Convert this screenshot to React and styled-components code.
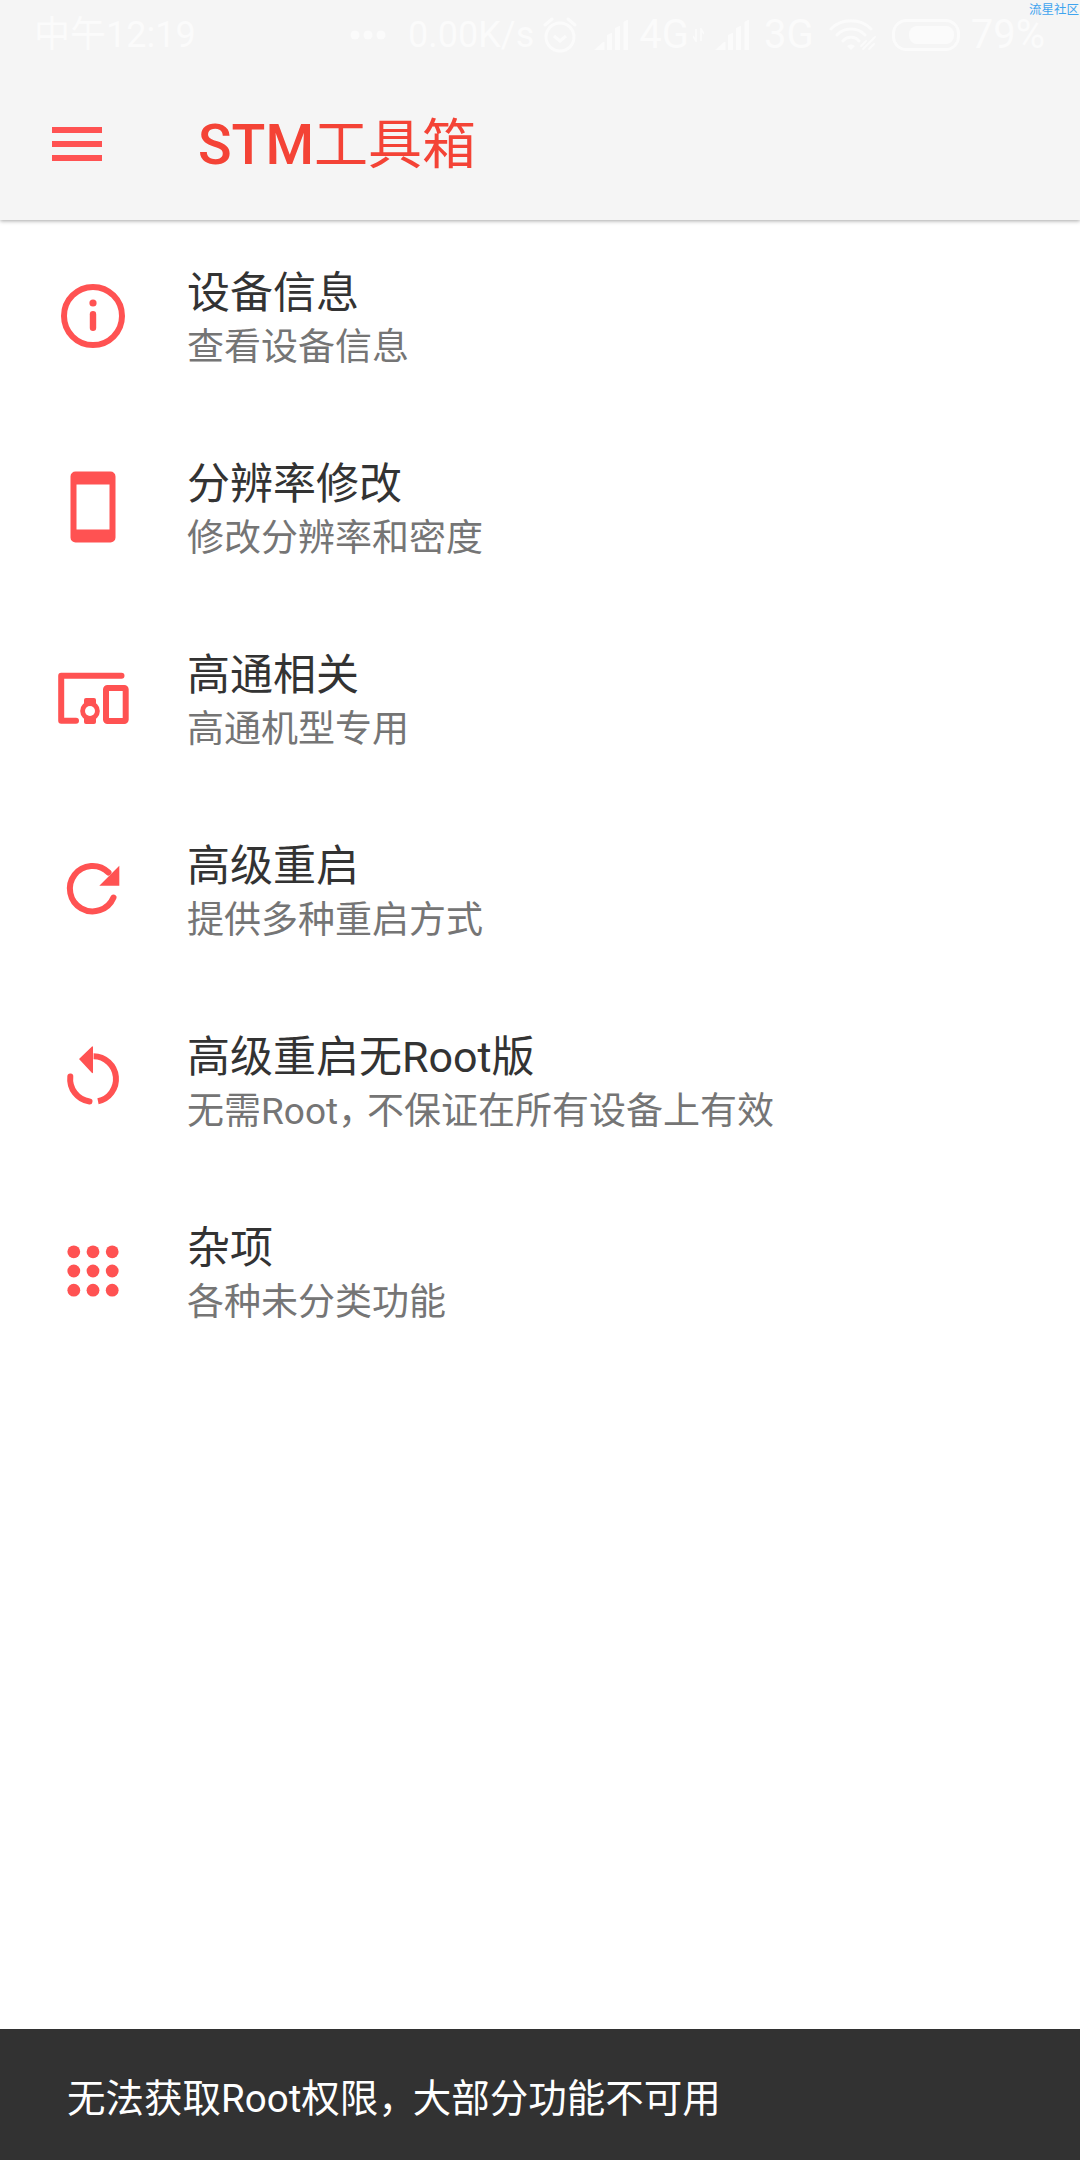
import React from "react";
import styled, { createGlobalStyle } from "styled-components";

const Global = createGlobalStyle`
  html, body { margin: 0; padding: 0; background: #fff; }
  body { font-family: Roboto, "Noto Sans CJK SC", sans-serif; }
`;

const Page = styled.div`
  position: relative;
  width: 1080px;
  height: 2160px;
  display: flex;
  flex-direction: column;
  background: #fff;
  overflow: hidden;
`;

const AppBar = styled.header`
  height: 220px;
  flex: none;
  display: flex;
  flex-direction: column;
  background: #f5f5f5;
  box-shadow: 0 1px 4px rgba(0, 0, 0, 0.35);
  position: relative;
  z-index: 1;
`;

const StatusBar = styled.div`
  height: 70px;
  display: flex;
  align-items: center;
  padding: 0 35px 0 34px;
  color: #fbfbfb;
  font-size: 36px;
  line-height: 70px;
`;

const Spacer = styled.div`
  flex: 1;
`;

const StatusText = styled.span`
  margin-left: ${(p) => p.$ml || 0}px;
  font-size: ${(p) => p.$size || 36}px;
  white-space: nowrap;
`;

const StatusIcon = styled.svg`
  flex: none;
  margin-left: ${(p) => p.$ml || 0}px;
  display: block;
`;

const Watermark = styled.span`
  position: absolute;
  top: 1px;
  right: 1px;
  font-size: 12.5px;
  line-height: 15px;
  color: #3fa4ef;
  font-family: "Noto Sans CJK SC", sans-serif;
`;

const Toolbar = styled.div`
  flex: 1;
  display: flex;
  align-items: center;
  padding-left: 52px;
`;

const Burger = styled.div`
  width: 50px;
  display: flex;
  flex-direction: column;
  gap: 8px;
  margin-bottom: 3px;
`;

const BurgerBar = styled.span`
  height: 6px;
  background: #ff5252;
  display: block;
`;

const Title = styled.h1`
  margin: 2px 0 0 96px;
  color: #f44336;
  font-size: 54px;
  font-weight: 400;
  line-height: 70px;
  white-space: nowrap;
`;

const Strong = styled.span`
  font-size: 55.5px;
  font-weight: 500;
`;

const List = styled.main`
  flex: 1;
  display: flex;
  flex-direction: column;
`;

const Row = styled.div`
  height: 191px;
  flex: none;
  display: flex;
  align-items: center;
  padding-left: 54px;
`;

const IconBox = styled.svg`
  width: 78px;
  height: 78px;
  flex: none;
  display: block;
`;

const RowText = styled.div`
  margin-left: 55px;
  padding-top: 9px;
  display: flex;
  flex-direction: column;
`;

const RowTitle = styled.div`
  color: #333;
  font-size: 43px;
  line-height: 56px;
  white-space: nowrap;
`;

const RowSub = styled.div`
  color: #757575;
  font-size: 37px;
  line-height: 54px;
  white-space: nowrap;
`;

const Comma = styled.span`
  letter-spacing: ${(p) => p.$tight}px;
`;

const Snackbar = styled.footer`
  height: 131px;
  flex: none;
  display: flex;
  align-items: center;
  padding-left: 67px;
  background: #323232;
  color: #fff;
  font-size: 38.5px;
`;

const RED = "#ff5252";

const InfoIcon = () => (
  <IconBox viewBox="0 0 78 78">
    <circle cx="39" cy="39" r="29" fill="none" stroke={RED} strokeWidth="6" />
    <circle cx="39" cy="26" r="3.6" fill={RED} />
    <rect x="35.800" y="34" width="6.400" height="20" rx="3.200" fill={RED} />
  </IconBox>
);

const PhoneIcon = () => (
  <IconBox viewBox="0 0 78 78">
    <path
      fillRule="evenodd"
      fill={RED}
      d="M21.5 3.5h35a5 5 0 0 1 5 5v61a5 5 0 0 1-5 5h-35a5 5 0 0 1-5-5v-61a5 5 0 0 1 5-5zM22.5 16.500v45h33v-45z"
    />
  </IconBox>
);

const DevicesIcon = () => (
  <IconBox viewBox="0 0 78 78">
    <path
      d="M67.500 16.700H7.200v45H22"
      fill="none"
      stroke={RED}
      strokeWidth="6"
      strokeLinecap="round"
      strokeLinejoin="round"
    />
    <rect x="52" y="29" width="19.700" height="33" rx="1.500" fill="none" stroke={RED} strokeWidth="6" />
    <rect x="30" y="39" width="12" height="26" rx="2" fill={RED} />
    <circle cx="36" cy="52" r="9.800" fill={RED} />
    <circle cx="36" cy="52" r="5" fill="#fff" />
  </IconBox>
);

const RefreshIcon = () => (
  <IconBox viewBox="0 0 78 78">
    <path
      d="M59.500 47.500A22.700 22.700 0 1 1 54.500 22.500"
      fill="none"
      stroke={RED}
      strokeWidth="6"
      strokeLinecap="round"
    />
    <path d="M65.300 15.700V35.700H45.300z" fill={RED} />
  </IconBox>
);

const RestoreIcon = () => (
  <IconBox viewBox="0 1 78 78">
    <path d="M39.600 16.300A22.700 22.700 0 0 1 44 61.200" fill="none" stroke={RED} strokeWidth="6" />
    <path
      d="M35.500 61.500A22.700 22.700 0 0 1 16.300 36.500"
      fill="none"
      stroke={RED}
      strokeWidth="6"
      strokeLinecap="round"
    />
    <path d="M25 19L38 6.500a0.600 0.600 0 0 1 1 0.500V32.500a0.600 0.600 0 0 1-1 0.500z" fill={RED} />
  </IconBox>
);

const GridIcon = () => (
  <IconBox viewBox="0 0 78 78">
    {[19.800, 39, 58.200].flatMap((y) =>
      [19.800, 39, 58.200].map((x) => <circle key={`${x}-${y}`} cx={x} cy={y} r="6.400" fill={RED} />)
    )}
  </IconBox>
);

const items = [
  { t: "设备信息", s: "查看设备信息", I: InfoIcon },
  { t: "分辨率修改", s: "修改分辨率和密度", I: PhoneIcon },
  { t: "高通相关", s: "高通机型专用", I: DevicesIcon },
  { t: "高级重启", s: "提供多种重启方式", I: RefreshIcon },
  {
    t: "高级重启无Root版",
    s: (
      <>
        无需Root<Comma $tight={-8}>，</Comma>不保证在所有设备上有效
      </>
    ),
    I: RestoreIcon,
  },
  { t: "杂项", s: "各种未分类功能", I: GridIcon },
];

const W = "#fbfbfb";

const Signal = ({ ml }) => (
  <StatusIcon $ml={ml} width="34" height="32" viewBox="0 0 34 32">
    <path fill={W} d="M0 31l9-8h1.500v8zM13 31V16l4-2h1v17zM21 31V9l4-2h1v24zM29.500 31V3l3-2h1.500v30z" />
  </StatusIcon>
);

const App = () => (
  <Page lang="zh-CN">
    <Global />
    <AppBar>
      <StatusBar>
        <StatusText>中午12:19</StatusText>
        <Spacer />
        <StatusIcon width="36" height="10" viewBox="0 0 36 10">
          <circle cx="5" cy="5" r="4.500" fill={W} />
          <circle cx="18" cy="5" r="4.500" fill={W} />
          <circle cx="31" cy="5" r="4.500" fill={W} />
        </StatusIcon>
        <StatusText $ml={22}>0.00K/s</StatusText>
        <StatusIcon $ml={9} width="34" height="36" viewBox="0 0 34 36">
          <circle cx="17" cy="20" r="14" fill="none" stroke={W} strokeWidth="3" />
          <path d="M11 19l6 5 6-5" fill="none" stroke={W} strokeWidth="3" />
          <path d="M2 8l7-6M32 8l-7-6" fill="none" stroke={W} strokeWidth="3" strokeLinecap="round" />
        </StatusIcon>
        <Signal ml={17} />
        <StatusText $ml={11} $size={40}>4G</StatusText>
        <StatusIcon $ml={4} width="11" height="14" viewBox="0 0 11 14">
          <path d="M3 1v12L0 8M8 13V1l3 5" fill="none" stroke={W} strokeWidth="1.500" />
        </StatusIcon>
        <Signal ml={11} />
        <StatusText $ml={15} $size={40}>3G</StatusText>
        <StatusIcon $ml={15} width="48" height="34" viewBox="0 0 48 34">
          <g fill="none" stroke={W} strokeWidth="3" strokeLinecap="round">
            <path d="M2 11C12 0 32 0 42 11" />
            <path d="M8 17C15 9 29 9 36 17" />
            <path d="M14 23C18 18 26 18 30 23" />
            <path d="M34 31l12-12M32 28l5-5M40 31l5-5" strokeWidth="2" />
          </g>
          <path d="M18 28a6 6 0 0 1 8 0l-4 4z" fill={W} />
        </StatusIcon>
        <StatusIcon $ml={15} width="68" height="32" viewBox="0 0 68 32">
          <rect x="1.500" y="1.500" width="65" height="29" rx="13" fill="none" stroke={W} strokeWidth="3" />
          <rect x="17" y="7" width="45" height="18" rx="8" fill={W} />
        </StatusIcon>
        <StatusText $ml={11} $size={40}>79%</StatusText>
      </StatusBar>
      <Toolbar>
        <Burger>
          <BurgerBar />
          <BurgerBar />
          <BurgerBar />
        </Burger>
        <Title>
          <Strong>STM</Strong>工具箱
        </Title>
      </Toolbar>
      <Watermark>流星社区</Watermark>
    </AppBar>
    <List>
      {items.map(({ t, s, I }) => (
        <Row key={t}>
          <I />
          <RowText>
            <RowTitle>{t}</RowTitle>
            <RowSub>{s}</RowSub>
          </RowText>
        </Row>
      ))}
    </List>
    <Snackbar>
      无法获取Root权限<Comma $tight={-4}>，</Comma>大部分功能不可用
    </Snackbar>
  </Page>
);

export default App;
